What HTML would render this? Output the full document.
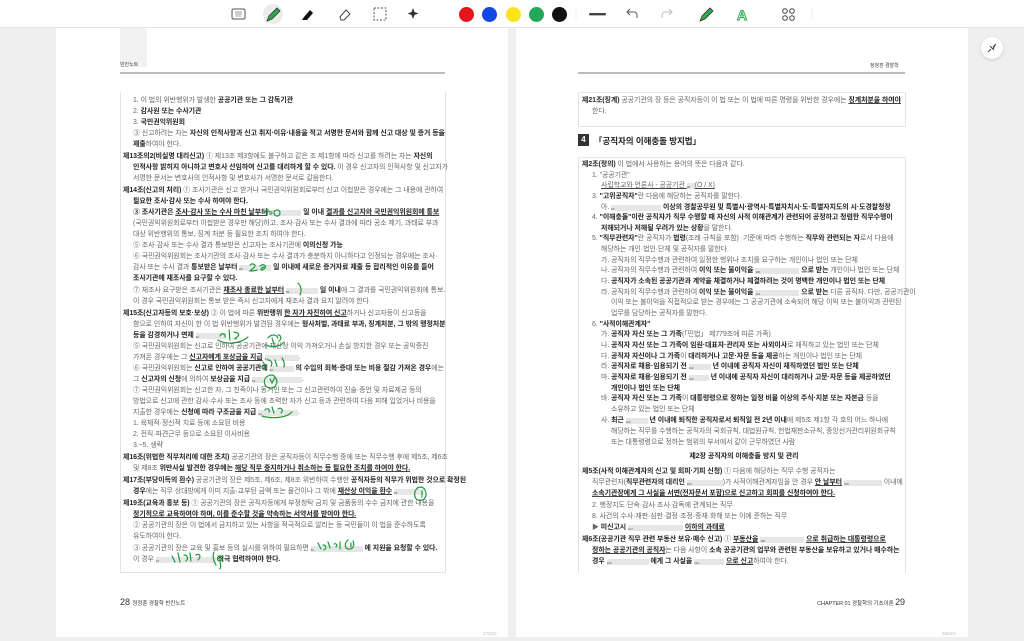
<!DOCTYPE html>
<html><head><meta charset="utf-8">
<style>
*{margin:0;padding:0;box-sizing:border-box}
body{width:1024px;height:641px;background:#efefef;position:relative;overflow:hidden;font-family:"Liberation Sans","Noto Sans CJK KR",sans-serif;color:#666}
.tb{position:absolute;left:0;top:0;width:1024px;height:28px;background:#fff;border-bottom:1px solid #e4e4e4}
.page{position:absolute;top:28px;height:609px;background:#fff}
.l{position:absolute;white-space:nowrap;font-size:6.95px;line-height:8px;color:#666;letter-spacing:-0.05px}
.l b{color:#262626;font-weight:bold}
.l u{text-decoration:underline;text-decoration-color:#444}
.bk{display:inline-block;height:6px;background:#e6e6e6;vertical-align:-1px;font-size:3px;color:#555}
.box{position:absolute;border:1px solid #e2e2e2;border-top:1px solid #e8e8e8}
.dot{position:absolute;width:15px;height:15px;border-radius:50%;top:7px}
svg{position:absolute;left:0;top:0}
</style></head><body>

<div class="tb"></div>
<div style="position:absolute;left:263px;top:4px;width:20px;height:20px;border-radius:50%;background:#ececec"></div>
<div class="dot" style="left:459px;background:#e8141c"></div>
<div class="dot" style="left:482px;background:#1446e6"></div>
<div class="dot" style="left:506px;background:#fde31a"></div>
<div class="dot" style="left:529px;background:#22a858"></div>
<div class="dot" style="left:552px;background:#111"></div>
<svg width="1024" height="28" viewBox="0 0 1024 28">
 <rect x="232" y="9" width="13" height="10" rx="1.5" fill="none" stroke="#555" stroke-width="1"/>
 <path d="M235 12h7M235 14h7M236 16h5" stroke="#777" stroke-width=".8"/>
 <path d="M267 21l2-5 8-8 3 3-8 8z" fill="#2ea84f" stroke="#333" stroke-width=".8"/>
 <path d="M302 20l2-3 6-7 3 3-6 7z" fill="#111"/>
 <path d="M340 17l6-7 4 4-6 6h-3z" fill="none" stroke="#444" stroke-width="1"/>
 <rect x="374" y="8" width="12" height="12" fill="none" stroke="#555" stroke-width="1" stroke-dasharray="2 1.5"/>
 <path d="M413 8l1.5 4 4 1.5-4 1.5-1.5 4-1.5-4-4-1.5 4-1.5z" fill="#333"/>
 <rect x="589" y="13" width="17" height="2.4" rx="1" fill="#444"/>
 <path d="M637 18v-3a3 3 0 0 0-3-3h-6M630 9l-3 3 3 3" fill="none" stroke="#555" stroke-width="1"/>
 <path d="M662 18v-3a3 3 0 0 1 3-3h6M669 9l3 3-3 3" fill="none" stroke="#bbb" stroke-width="1"/>
 <path d="M700 21l2-5 8-8 3 3-8 8z" fill="#2ea84f" stroke="#333" stroke-width=".8"/>
 <text x="737" y="20" font-size="14" font-weight="bold" fill="#fff" stroke="#2ea84f" stroke-width="1" font-family="Liberation Sans">A</text>
 <circle cx="785" cy="11" r="2.3" fill="none" stroke="#444"/><circle cx="792" cy="11" r="2.3" fill="none" stroke="#444"/>
 <circle cx="785" cy="18" r="2.3" fill="none" stroke="#444"/><circle cx="792" cy="18" r="2.3" fill="none" stroke="#444"/>
 <path d="M576 8v12M812 8v12" stroke="#eee"/>
</svg>

<div class="page" style="left:56px;width:452px"></div>
<div style="position:absolute;left:120px;top:28px;width:27px;height:39px;background:#f2f2f2"></div>
<div class="l" style="left:120px;top:61px;font-size:5px;color:#444">빈칸노트</div>
<div style="position:absolute;left:120px;top:72px;width:325px;height:1.5px;background:#bbb"></div>
<div class="box" style="left:120px;top:92px;width:326px;height:481px;border-top:none"></div>

<div class="l" style="left:133px;top:97px">1. 이 법의 위반행위가 발생한 <b>공공기관 또는 그 감독기관</b></div>
<div class="l" style="left:133px;top:108px">2. <b>감사원 또는 수사기관</b></div>
<div class="l" style="left:133px;top:119px">3. <b>국민권익위원회</b></div>
<div class="l" style="left:133px;top:130px">③ 신고하려는 자는 <b>자신의 인적사항과 신고 취지·이유·내용을 적고 서명한 문서와 함께 신고 대상 및 증거 등을</b></div>
<div class="l" style="left:133px;top:141px"><b>제출</b>하여야 한다.</div>
<div class="l" style="left:123px;top:153px"><b>제13조의2(비실명 대리신고)</b> ① 제13조 제3항에도 불구하고 같은 조 제1항에 따라 신고를 하려는 자는 <b>자신의</b></div>
<div class="l" style="left:133px;top:164px"><b>인적사항 밝히지 아니하고 변호사 선임하여 신고를 대리하게 할 수 있다.</b> 이 경우 신고자의 인적사항 및 신고자가</div>
<div class="l" style="left:133px;top:175px">서명한 문서는 변호사의 인적사항 및 변호사가 서명한 문서로 갈음한다.</div>
<div class="l" style="left:123px;top:187px"><b>제14조(신고의 처리)</b> ① 조사기관은 신고 받거나 국민권익위원회로부터 신고 이첩받은 경우에는 그 내용에 관하여</div>
<div class="l" style="left:133px;top:198px"><b>필요한 조사·감사 또는 수사 하여야 한다.</b></div>
<div class="l" style="left:133px;top:209px"><b>③ 조사기관은 <u>조사·감사 또는 수사 마친 날부터</u> <span class="bk" style="width:32px">87</span> 일 이내 <u>결과를 신고자와 국민권익위원회에 통보</u></b></div>
<div class="l" style="left:133px;top:220px">(국민권익위원회로부터 이첩받은 경우만 해당)하고, 조사·감사 또는 수사 결과에 따라 공소 제기, 과태료 부과</div>
<div class="l" style="left:133px;top:231px">대상 위반행위의 통보, 징계 처분 등 필요한 조치 하여야 한다.</div>
<div class="l" style="left:133px;top:242px">⑤ 조사·감사 또는 수사 결과 통보받은 신고자는 조사기관에 <b>이의신청 가능</b></div>
<div class="l" style="left:133px;top:253px">⑥ 국민권익위원회는 조사기관의 조사·감사 또는 수사 결과가 충분하지 아니하다고 인정되는 경우에는 조사·</div>
<div class="l" style="left:133px;top:264px">감사 또는 수사 결과 <b>통보받은 날부터</b> <span class="bk" style="width:32px">88</span> <b>일 이내에 새로운 증거자료 제출 등 합리적인 이유를 들어</b></div>
<div class="l" style="left:133px;top:275px"><b>조사기관에 재조사를 요구할 수 있다.</b></div>
<div class="l" style="left:133px;top:287px">⑦ 재조사 요구받은 조사기관은 <b><u>재조사 종료한 날부터</u></b> <span class="bk" style="width:32px">89</span> <b>일 이내</b>에 그 결과를 국민권익위원회에 통보.</div>
<div class="l" style="left:133px;top:298px">이 경우 국민권익위원회는 통보 받은 즉시 신고자에게 재조사 결과 요지 알려야 한다.</div>
<div class="l" style="left:123px;top:310px"><b>제15조(신고자등의 보호·보상)</b> ② 이 법에 따른 <b>위반행위 <u>한 자가 자진하여 신고</u></b>하거나 신고자등이 신고등을</div>
<div class="l" style="left:133px;top:321px">함으로 인하여 자신이 한 이 법 위반행위가 발견된 경우에는 <b>형사처벌, 과태료 부과, 징계처분, 그 밖의 행정처분</b></div>
<div class="l" style="left:133px;top:332px"><b>등을 감경하거나 면제</b> <span class="bk" style="width:30px">90</span></div>
<div class="l" style="left:133px;top:343px">⑤ 국민권익위원회는 신고로 인하여 공공기관에 재산상 이익 가져오거나 손실 방지한 경우 또는 공익증진</div>
<div class="l" style="left:133px;top:354px">가져온 경우에는 그 <b><u>신고자에게 포상금을 지급</u></b> <span class="bk" style="width:34px">91</span>.</div>
<div class="l" style="left:133px;top:365px">⑥ 국민권익위원회는 <b>신고로 인하여 공공기관에</b> <span class="bk" style="width:24px">92</span> <b>의 수입의 회복·증대 또는 비용 절감 가져온 경우</b>에는</div>
<div class="l" style="left:133px;top:376px">그 <b>신고자의 신청</b>에 의하여 <b>보상금을 지급</b> <span class="bk" style="width:50px">93</span>.</div>
<div class="l" style="left:133px;top:387px">⑦ 국민권익위원회는 신고한 자, 그 친족이나 동거인 또는 그 신고관련하여 진술·증언 및 자료제공 등의</div>
<div class="l" style="left:133px;top:398px">방법으로 신고에 관한 감사·수사 또는 조사 등에 조력한 자가 신고 등과 관련하여 다음 피해 입었거나 비용을</div>
<div class="l" style="left:133px;top:409px">지출한 경우에는 <b>신청에 따라 구조금을 지급</b> <span class="bk" style="width:40px">94</span>.</div>
<div class="l" style="left:133px;top:420px">1. 육체적·정신적 치료 등에 소요된 비용</div>
<div class="l" style="left:133px;top:431px">2. 전직·파견근무 등으로 소요된 이사비용</div>
<div class="l" style="left:133px;top:442px">3.~5. 생략</div>
<div class="l" style="left:123px;top:454px"><b>제16조(위법한 직무처리에 대한 조치)</b> 공공기관의 장은 공직자등이 직무수행 중에 또는 직무수행 후에 제5조, 제6조</div>
<div class="l" style="left:133px;top:465px">및 제8조 <b>위반사실 발견한 경우에는 <u>해당 직무 중지하거나 취소하는 등 필요한 조치를 하여야 한다.</u></b></div>
<div class="l" style="left:123px;top:477px"><b>제17조(부당이득의 환수)</b> 공공기관의 장은 제5조, 제6조, 제8조 위반하여 수행한 <b>공직자등의 직무가 위법한 것으로 확정된</b></div>
<div class="l" style="left:133px;top:488px"><b>경우</b>에는 직무 상대방에게 이미 지출·교부된 금액 또는 물건이나 그 밖에 <b><u>재산상 이익을 환수</u></b> <span class="bk" style="width:30px">95</span></div>
<div class="l" style="left:123px;top:500px"><b>제19조(교육과 홍보 등)</b> ① 공공기관의 장은 공직자등에게 부정청탁 금지 및 금품등의 수수 금지에 관한 내용을</div>
<div class="l" style="left:133px;top:511px"><b><u>정기적으로 교육하여야 하며, 이를 준수할 것을 약속하는 서약서를 받아야 한다.</u></b></div>
<div class="l" style="left:133px;top:522px">② 공공기관의 장은 이 법에서 금지하고 있는 사항을 적극적으로 알리는 등 국민들이 이 법을 준수하도록</div>
<div class="l" style="left:133px;top:533px">유도하여야 한다.</div>
<div class="l" style="left:133px;top:545px">③ 공공기관의 장은 교육 및 홍보 등의 실시를 위하여 필요하면 <span class="bk" style="width:52px">96</span> <b>에 지원을 요청할 수 있다.</b></div>
<div class="l" style="left:133px;top:556px">이 경우 <span class="bk" style="width:60px">97</span> <b>적극 협력하여야 한다.</b></div>

<div class="l" style="left:120px;top:597px;font-size:9px;line-height:10px;color:#333">28 <span style="font-size:5.5px">정정훈 경찰학 빈칸노트</span></div>
<div class="l" style="left:483px;top:630px;font-size:4.5px;color:#bbb">27/223</div>

<svg width="1024" height="641" viewBox="0 0 1024 641" fill="none" stroke="#1f9a3a" stroke-width="1.2" stroke-linecap="round">
 <path d="M264 212c3-1 6 0 8 0M268 209l-1 6M274 213c0-4 6-4 6 0s-6 4-6 0"/>
 <path d="M250 265c2-2 5-1 5 1s-4 3-5 5c3 0 5 0 7-1M260 266c3-3 8 0 4 3s-4-1 0-2"/>
 <path d="M298 283c3 3 4 7 2 12"/>
 <path d="M220 336c2-4 6-2 5 1M229 330c1 4 0 8 1 10M234 332c3 1 6 1 4 4s-5 2-2 3M218 340c8 5 22 4 30-3"/>
 <path d="M268 338c3-4 8-4 10 0M272 338l2 6M278 335c3 0 4 4 1 6M266 345c6 3 14 2 18-3"/>
 <path d="M263 362c2 2 2 6 1 8M268 360c3 0 5 3 3 6M275 360l2 6M282 358c2 3 3 6 2 9"/>
 <path d="M268 376c-5 2-5 10 1 12 7 1 10-6 6-11-2-3-5-2-7-1M270 379l2 4 3-6"/>
 <path d="M265 410c3-3 5 0 4 2M272 407l2 6M278 409c3-2 6 1 3 4M262 416c10 3 25 2 30-4"/>
 <path d="M418 488c-4 2-5 10 0 12 6 2 10-4 7-10-2-4-6-3-8-2M422 491v6"/>
 <path d="M318 543l3 6M323 545c3 0 4 3 1 5M328 542l2 6M334 544c2-1 4 1 2 3M340 542v7M348 540c-3 2-4 8 0 9 5 1 7-4 5-8M351 543v4"/>
 <path d="M172 556l3 6M178 553l2 9M184 555c3 0 5 3 2 6M190 553l1 8M196 555c3-2 6 1 2 5M214 552c-2 4 0 10 2 13M220 556c-3 0-4 5 0 5 4-1 2-6-1-5M220 562c1 3 1 5 0 7"/>
</svg>

<div class="page" style="left:516px;width:452px"></div>
<div class="l" style="left:870px;top:62px;font-size:5px;color:#444">정정훈 경찰학</div>
<div style="position:absolute;left:578px;top:72px;width:327px;height:1.5px;background:#bbb"></div>
<div class="box" style="left:578px;top:92px;width:328px;height:35px"></div>
<div class="l" style="left:582px;top:97px"><b>제21조(징계)</b> 공공기관의 장 등은 공직자등이 이 법 또는 이 법에 따른 명령을 위반한 경우에는 <b><u>징계처분을 하여야</u></b></div>
<div class="l" style="left:592px;top:108px">한다.</div>
<div style="position:absolute;left:578px;top:134px;width:11px;height:12px;background:#333;color:#fff;font-size:8px;font-weight:bold;text-align:center;line-height:12px">4</div>
<div class="l" style="left:594px;top:136px;font-size:8.5px;line-height:10px;color:#222;font-weight:bold">「공직자의 이해충돌 방지법」</div>
<div class="box" style="left:578px;top:157px;width:328px;height:416px;border-bottom:none"></div>

<div class="l" style="left:582px;top:161px"><b>제2조(정의)</b> 이 법에서 사용하는 용어의 뜻은 다음과 같다.</div>
<div class="l" style="left:592px;top:172px">1. "공공기관"</div>
<div class="l" style="left:601px;top:182px"><u>사립학교와 언론사 - 공공기관 <span class="bk" style="width:8px">98</span>(O / X)</u></div>
<div class="l" style="left:592px;top:193px">3. <b>"고위공직자"</b>란 다음에 해당하는 공직자를 말한다.</div>
<div class="l" style="left:601px;top:204px">아. <span class="bk" style="width:50px">99</span> <b>이상의 경찰공무원 및 특별시·광역시·특별자치시·도·특별자치도의 시·도경찰청장</b></div>
<div class="l" style="left:592px;top:214px">4. <b>"이해충돌"이란 공직자가 직무 수행할 때 자신의 사적 이해관계가 관련되어 공정하고 청렴한 직무수행이</b></div>
<div class="l" style="left:601px;top:225px"><b>저해되거나 저해될 우려가 있는 상황</b>을 말한다.</div>
<div class="l" style="left:592px;top:235px">5. <b>"직무관련자"</b>란 공직자가 <b>법령</b>(조례·규칙을 포함) ·기준에 따라 수행하는 <b>직무와 관련되는 자</b>로서 다음에</div>
<div class="l" style="left:601px;top:246px">해당하는 개인·법인·단체 및 공직자를 말한다.</div>
<div class="l" style="left:601px;top:257px">가. 공직자의 직무수행과 관련하여 일정한 행위나 조치를 요구하는 개인이나 법인 또는 단체</div>
<div class="l" style="left:601px;top:267px">나. 공직자의 직무수행과 관련하여 <b>이익 또는 불이익을</b> <span class="bk" style="width:44px">100</span> <b>으로 받는</b> 개인이나 법인 또는 단체</div>
<div class="l" style="left:601px;top:278px">다. <b>공직자가 소속된 공공기관과 계약을 체결하거나 체결하려는 것이 명백한 개인이나 법인 또는 단체</b></div>
<div class="l" style="left:601px;top:289px">라. 공직자의 직무수행과 관련하여 <b>이익 또는 불이익을</b> <span class="bk" style="width:44px">101</span> <b>으로 받는</b> 다른 공직자. 다만, 공공기관이</div>
<div class="l" style="left:611px;top:299px">이익 또는 불이익을 직접적으로 받는 경우에는 그 공공기관에 소속되어 해당 이익 또는 불이익과 관련된</div>
<div class="l" style="left:611px;top:310px">업무를 담당하는 공직자를 말한다.</div>
<div class="l" style="left:592px;top:321px">6. <b>"사적이해관계자"</b></div>
<div class="l" style="left:601px;top:331px">가. <b>공직자 자신 또는 그 가족</b>(「민법」 제779조에 따른 가족)</div>
<div class="l" style="left:601px;top:342px">나. <b>공직자 자신 또는 그 가족이 임원·대표자·관리자 또는 사외이사</b>로 재직하고 있는 법인 또는 단체</div>
<div class="l" style="left:601px;top:353px">다. <b>공직자 자신이나 그 가족</b>이 <b>대리하거나 고문·자문 등을 제공</b>하는 개인이나 법인 또는 단체</div>
<div class="l" style="left:601px;top:363px">라. <b>공직자로 채용·임용되기 전</b> <span class="bk" style="width:22px">102</span> <b>년 이내에 공직자 자신이 재직하였던 법인 또는 단체</b></div>
<div class="l" style="left:601px;top:374px">마. <b>공직자로 채용·임용되기 전</b> <span class="bk" style="width:20px">103</span> <b>년 이내에 공직자 자신이 대리하거나 고문·자문 등을 제공하였던</b></div>
<div class="l" style="left:611px;top:385px"><b>개인이나 법인 또는 단체</b></div>
<div class="l" style="left:601px;top:395px">바. <b>공직자 자신 또는 그 가족</b>이 <b>대통령령으로 정하는 일정 비율 이상의 주식·지분 또는 자본금</b> 등을</div>
<div class="l" style="left:611px;top:406px">소유하고 있는 법인 또는 단체</div>
<div class="l" style="left:601px;top:417px">사. <b>최근</b> <span class="bk" style="width:22px">104</span> <b>년 이내에 퇴직한 공직자로서 퇴직일 전 2년 이내</b>에 제5조 제1항 각 호의 어느 하나에</div>
<div class="l" style="left:611px;top:428px">해당하는 직무를 수행하는 공직자의 국회규칙, 대법원규칙, 헌법재판소규칙, 중앙선거관리위원회규칙</div>
<div class="l" style="left:611px;top:439px">또는 대통령령으로 정하는 범위의 부서에서 같이 근무하였던 사람</div>
<div class="l" style="left:582px;top:453px;width:324px;text-align:center;font-size:7px"><b>제2장 공직자의 이해충돌 방지 및 관리</b></div>
<div class="l" style="left:582px;top:468px"><b>제5조(사적 이해관계자의 신고 및 회피·기피 신청)</b> ① 다음에 해당하는 직무 수행 공직자는</div>
<div class="l" style="left:592px;top:479px">직무관련자(<b>직무관련자의 대리인</b> <span class="bk" style="width:36px">105</span>)가 사적이해관계자임을 안 경우 <b><u>안 날부터</u></b> <span class="bk" style="width:38px">106</span> 이내에</div>
<div class="l" style="left:592px;top:490px"><b><u>소속기관장에게 그 사실을 서면(전자문서 포함)으로 신고하고 회피를 신청하여야 한다.</u></b></div>
<div class="l" style="left:592px;top:502px">2. 행정지도·단속·감사·조사·감독에 관계되는 직무</div>
<div class="l" style="left:592px;top:513px">8. 사건의 수사·재판·심판·결정·조정·중재·화해 또는 이에 준하는 직무</div>
<div class="l" style="left:592px;top:524px">▶ <b>미신고시</b> <span class="bk" style="width:55px">107</span> <b><u>이하의 과태료</u></b></div>
<div class="l" style="left:582px;top:536px"><b>제6조(공공기관 직무 관련 부동산 보유·매수 신고)</b> ① <b><u>부동산을</u></b> <span class="bk" style="width:44px">108</span> <b><u>으로 취급하는 대통령령으로</u></b></div>
<div class="l" style="left:592px;top:547px"><b><u>정하는 공공기관의 공직자</u></b>는 다음 사항이 <b>소속 공공기관의 업무와 관련된 부동산을 보유하고 있거나 매수하는</b></div>
<div class="l" style="left:592px;top:558px"><b>경우</b> <span class="bk" style="width:42px">109</span> <b>에게 그 사실을</b> <span class="bk" style="width:30px">110</span> <b><u>으로 신고</u></b>하여야 한다.</div>

<div class="l" style="left:780px;top:597px;font-size:5.5px;line-height:10px;color:#333;width:125px;text-align:right">CHAPTER 01 경찰학의 기초이론 <span style="font-size:9px">29</span></div>
<div class="l" style="left:942px;top:630px;font-size:4.5px;color:#bbb">28/223</div>

<div style="position:absolute;left:981px;top:37px;width:22px;height:22px;border-radius:50%;background:#fff;box-shadow:0 1px 3px rgba(0,0,0,.15)"></div>
<svg width="1024" height="641" viewBox="0 0 1024 641"><path d="M988 52l3-3M996 44l-3 3M990 46l3 3 2-4M994 50l-3-3" stroke="#444" stroke-width="1" fill="none"/></svg>
</body></html>
